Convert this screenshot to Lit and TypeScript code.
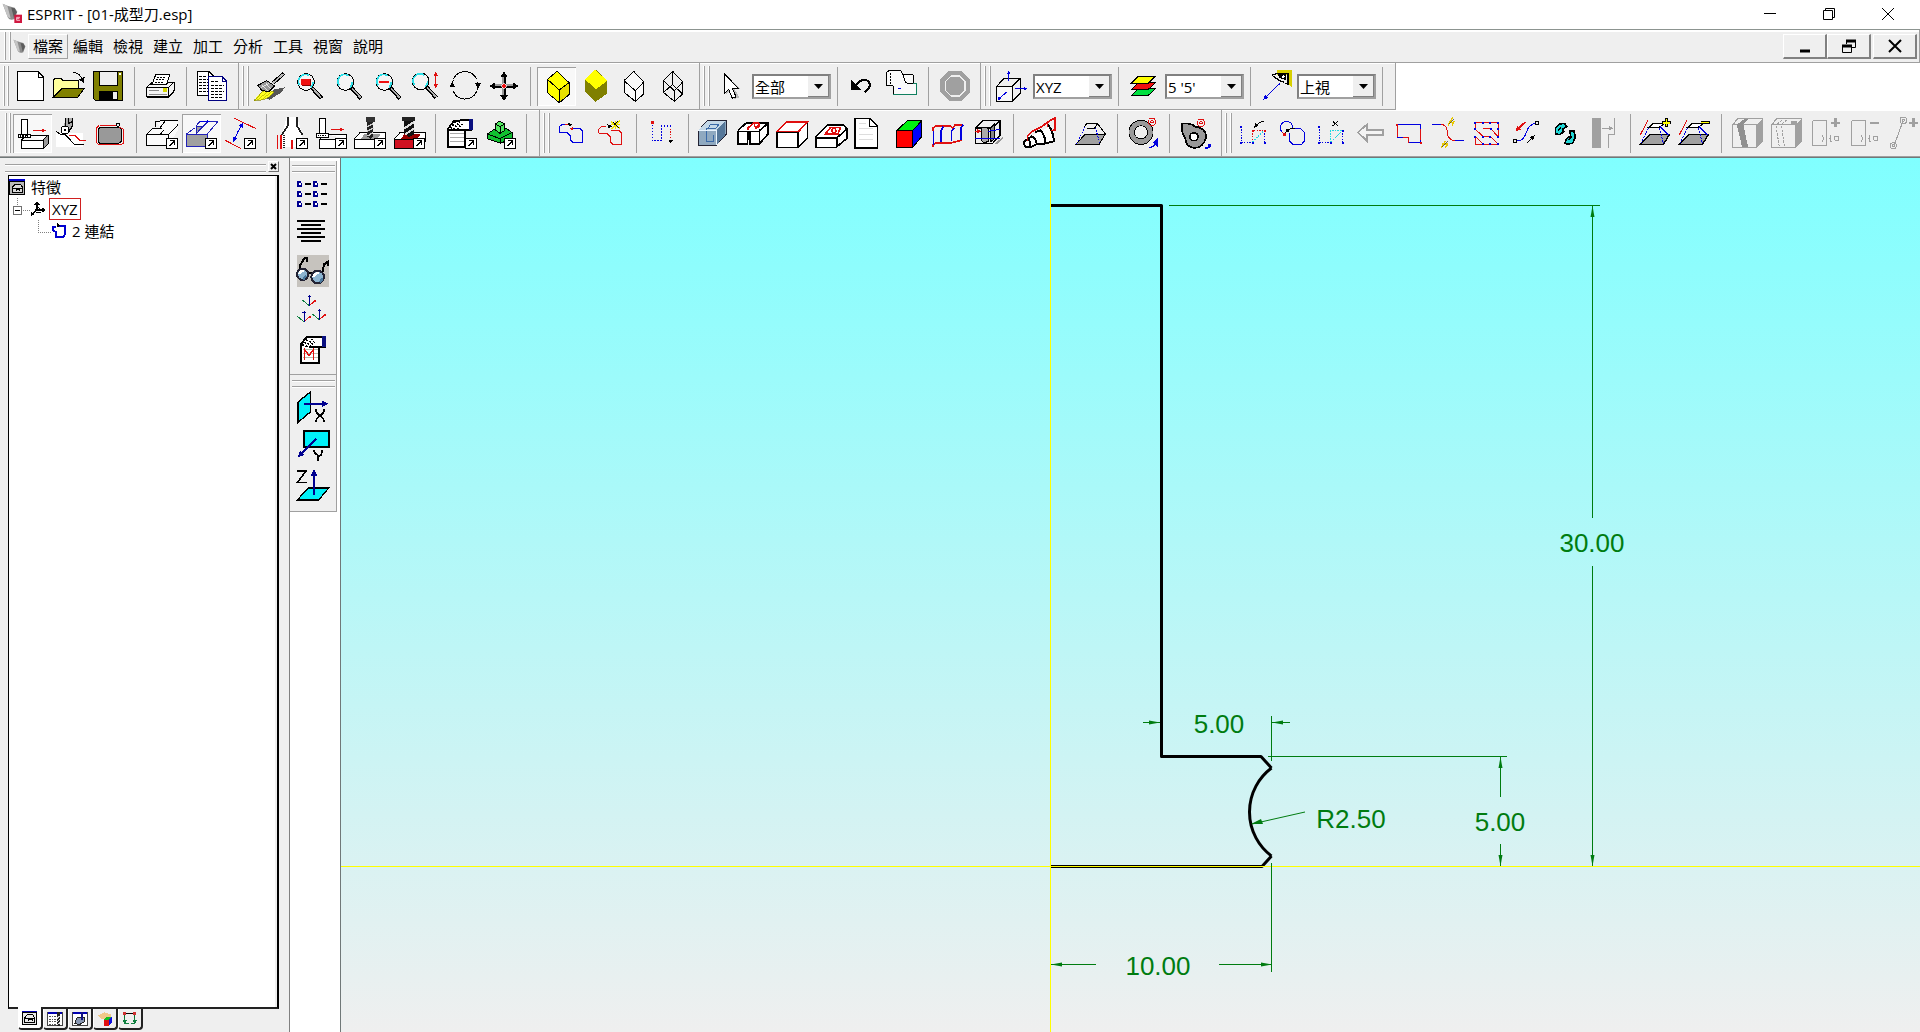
import { LitElement, html, css, svg, nothing, TemplateResult } from "lit";
import { customElement, state } from "lit/decorators.js";

type Art = unknown;
interface Tool { label: string; x: number; y: number; art: Art; on?: boolean; off?: boolean }
interface Combo { label: string; options: string[] }
type Item = Tool | Combo | "|";

/* Artwork uses three units per pixel; x and y name the corner of each icon's cell. */
const p = (d: string, stroke = "#000", w = 3, fill = "none", dash = ""): Art =>
  svg`<path d=${d} stroke=${stroke} stroke-width=${w} fill=${fill} stroke-dasharray=${dash || nothing}></path>`;
const f = (d: string, fill = "#000"): Art => p(d, "none", 0, fill);
const c = (x: number, y: number, r: number, stroke = "#000", w = 3, fill = "none"): Art =>
  svg`<circle cx=${x} cy=${y} r=${r} stroke=${stroke} stroke-width=${w} fill=${fill}></circle>`;
const arrow = (x1: number, y1: number, x2: number, y2: number, color = "#000", w = 3, h = 12): Art => {
  const a = Math.atan2(y2 - y1, x2 - x1);
  const bx = x2 - Math.cos(a) * h, by = y2 - Math.sin(a) * h;
  const nx = (-Math.sin(a) * h) / 2, ny = (Math.cos(a) * h) / 2;
  return [
    p(`M${x1},${y1}L${bx},${by}`, color, w),
    f(`M${x2},${y2}L${bx + nx},${by + ny}L${bx - nx},${by - ny}z`, color),
  ];
};
const more = (x: number, y: number): Art => [
  p(`M${x + 70},${y + 73}h33v30h-33z`, "#000", 3, "#fff"),
  p(`M${x + 79},${y + 96}l15,-15M${x + 82},${y + 80}h13v13`, "#000", 3),
];
const lens = (x: number, y: number, inner: Art = nothing): Art => [
  p(`M${x + 18},${y + 18}L${x + 47},${y + 49}`, "#000", 12),
  p(`M${x + 20},${y + 19}L${x + 46},${y + 47}`, "#b0b0b0", 5),
  c(x, y, 25, "#000", 3, "#f4f4f4"),
  p(`M${x - 19},${y + 10}A21,21 0 0 1 ${x + 10},${y - 19}M${x + 14},${y + 16}A21,21 0 0 0 ${x + 21},${y}`, "#2fe0e8", 5),
  inner,
];
const ctrl = "#a0a0a0";
const RED = "#e01010", BLUE = "#0000e0";

const icon = (x: number, y: number, art: Art, w = 39, h = w) =>
  html`<svg class="ico" width=${w} height=${h} viewBox="${x} ${y} ${w * 3} ${h * 3}" aria-hidden="true">${art}</svg>`;

const dots = (pts: number[][], color: string, r = 3): Art =>
  pts.map(([x, y]) => f(`M${x - r},${y - r}h${2 * r}v${2 * r}h${-2 * r}z`, color));

const cube = "M231,34L202,58V98L238,128L267,104V68z";
const cubeIn = "M202,58L238,90L267,68M238,90V128";

const fileBand: Item[] = [
  { label: "開新檔案", x: 33, y: 201, art: [p("M52,214H114L131,231V301H52z", "#000", 3, "#fff"), p("M114,214V231H131")] },
  { label: "開啟", x: 150, y: 201, art: [
    p("M160,291V241L166,235H183L189,241H236V264H187z", "#000", 3, "#ffff9c"),
    p("M160,291L187,264H254L234,291z", "#000", 3, "#808000"),
    p("M219,218Q238,216 247,240"), f("M236,238L252,250L254,230z")] },
  { label: "儲存", x: 267, y: 201, art: [
    p("M281,214H368V300H285L281,296z", "#000", 3, "#808000"), p("M297,214H352V256H297z", "#000", 3, "#efefef"),
    f("M297,272H354V300H297z"), f("M338,277H350V296H338z", "#efefef"), f("M358,219h6v6h-6z", "#fff")] },
  "|",
  { label: "列印", x: 423, y: 201, art: [
    p("M440,262L458,246H522V272L506,290H440z", "#000", 3, "#f4f4f4"), p("M440,262H506V290M506,262L522,246"),
    p("M468,222H510L500,254H456z", "#000", 3, "#fff"), p("M472,231h27M468,239h27M464,247h27", "#000", 3, "none", "6 3"),
    p("M446,270H478M446,283H500", "#888"), f("M488,264h14v11h-14z", "#d8d800"), p("M440,291H506L522,273", "#000", 4)] },
  "|",
  { label: "複製", x: 579, y: 201, art: [
    p("M592,214H626L640,228V286H592z", "#000", 3, "#fff"), p("M626,214V228H640"),
    p("M598,229h22M598,238h34M598,247h30M598,256h34M598,265h34M598,275h30", "#000", 3, "none", "9 3"),
    p("M626,230H666L680,244V301H626z", "#000080", 3, "#fff"), p("M666,230V244H680", "#000080"),
    p("M632,245h25M632,255h40M632,264h34M632,273h40M632,282h34M632,291h34", "#000", 3, "none", "9 3")] },
];

const viewBand: Item[] = [
  { label: "重繪", x: 753, y: 201, art: [
    f("M792,290L824,268L854,262L846,276L808,300z", "#555"),
    p("M762,302Q778,276 800,268L822,276Q806,302 762,302z", "#808000", 2, "#ffff20"), p("M772,300L802,276M784,300L812,278", "#b0b000", 2),
    p("M774,256L800,242L824,258L806,276L784,270z", "#000", 3, "#999"), p("M784,254L802,272M796,248L812,266M782,264L806,250", "#fff", 2),
    p("M818,250L852,220", "#000", 11), p("M818,250L850,222", "#bbb", 5)] },
  { label: "視窗縮放", x: 870, y: 201, art: lens(918, 246, [f("M903,236h28v20h-28z", "#f01010"), p("M905,256h26v-20", "#800", 3)]) },
  { label: "縮放", x: 987, y: 201, art: lens(1036, 246) },
  { label: "縮小", x: 1104, y: 201, art: lens(1153, 246, f("M1137,243h31v7h-31z", "#f01010")) },
  { label: "動態縮放", x: 1221, y: 201, art: [lens(1262, 244), arrow(1307, 240, 1307, 215, RED, 3, 14), arrow(1307, 240, 1307, 265, RED, 3, 14)] },
  { label: "旋轉", x: 1338, y: 201, art: [
    p("M1360,238A38,38 0 0 1 1430,238M1430,274A38,38 0 0 1 1360,274"), p("M1357,262Q1356,250 1360,240M1434,246Q1435,258 1431,270"),
    f("M1348,262L1357,246L1367,262z"), f("M1425,250L1434,267L1443,250z")] },
  { label: "平移", x: 15, y: 21, art: [
    p("M72,44V112M38,78H106", "#999", 10), p("M74,46V112M38,80H106", "#000", 5),
    f("M72,34L60,52H84z"), f("M72,122L60,106H84z"), f("M29,78L46,66V90z"), f("M115,78L98,66V90z"), c(72, 78, 7, "#fff", 2, "#f01010")] },
  "|",
  { label: "著色加邊", x: 171, y: 21, on: true, art: [p(cube, "#000", 3, "#ff0"), f("M238,90L267,68V104L238,128z", "#e8e000"), p(cube), p(cubeIn)] },
  { label: "著色", x: 288, y: 21, art: [f("M348,30L315,58V96L346,126L382,100V62z", "#808000"), f("M345,30L315,58L348,88L382,62z", "#ff0")] },
  { label: "隱藏線", x: 405, y: 21, art: [p("M461,34L432,62V97L466,124L491,102V66z", "#000", 3, "#fafafa"), p("M432,62L466,92L491,66M466,92V124")] },
  { label: "線架構", x: 522, y: 21, art: [p("M578,34L550,62V97L583,124L608,102V66z"), p("M550,62L583,92L608,66M583,92V124M578,34V74L550,97M578,74L608,102", "#000", 3)] },
];

const selectBand: Item[] = [
  { label: "選取", x: 696, y: 21, art: [f("M738,46V104L750,92L762,118L778,112L764,88H782z", "#bbb"), p("M733,41V100L746,88L757,115L768,111L757,84H774z", "#000", 3, "#fff")] },
  { label: "選取類型", options: ["全部"] },
  "|",
  { label: "復原", x: 1092, y: 21, art: [p("M1126,80C1136,56 1164,54 1169,72C1171,82 1164,90 1154,96", "#000", 6), f("M1113,60V91L1144,89z")] },
  { label: "群組", x: 1209, y: 21, art: [
    f("M1219,38L1227,32H1262L1268,42H1296L1301,48V70H1310V103H1240V77H1219z", "#fafafa"),
    p("M1219,74V38L1227,32H1262L1268,42H1296L1301,48V69M1219,75H1236L1240,80V103"), p("M1231,40V74", "#000", 3, "none", "4 5"),
    p("M1268,42L1276,66L1284,70H1300", "#000", 3), p("M1240,103H1310V70H1298", "#108060", 3), p("M1253,86h10", BLUE)] },
  "|",
  { label: "停止", x: -18, y: 21, off: true, art: [
    f("M24,33H62L88,59V97L62,123H24L-2,97V59z", "#a0a0a0"), p("M30,48H56L72,64V92L56,108H30L14,92V64z", "#efefef", 4)] },
];

const planeBand: Item[] = [
  { label: "工作平面", x: 159, y: 21, art: [
    p("M170,79H216V124H170z", "#000", 3, "#f8f8f8"), p("M170,79L192,55H240V100L216,124M216,79L240,55"),
    arrow(206, 64, 206, 31, BLUE), arrow(226, 86, 263, 86, BLUE), arrow(200, 96, 172, 121, BLUE)] },
  { label: "座標系", options: ["XYZ"] },
  "|",
  { label: "圖層", x: 555, y: 21, art: [
    p("M594,86H646L624,107H574z", "#000", 3, "#00e040"), p("M594,68H646L624,89H574z", "#000", 3, "#f01010"), p("M594,49H646L624,70H574z", "#000", 3, "#ff0")] },
  { label: "目前圖層", options: ["5 '5'"] },
  "|",
  { label: "視圖", x: 951, y: 21, art: [
    f("M1012,30H1056V84L1044,72V44H1012z", "#d8d000"), p("M996,46L1012,40H1044V72L1034,70M1000,48Q1014,62 1032,66M1014,42Q1020,52 1034,54", "#000", 4),
    f("M1012,42H1038V60L1018,54z"), c(1030, 50, 4, "none", 0, "#fff"), arrow(1020, 70, 970, 119, BLUE, 3, 15)] },
  { label: "視角", options: ["上視"] },
  "|",
];

const cutBlock = (x: number, color: string): Art => [
  p(`M${x},418L${x + 18},398H${x + 94}V424L${x + 72},444H${x}z`, "#000", 3, "#fff"),
  f(`M${x},418H${x + 74}V444H${x}z`, color), p(`M${x},418H${x + 74}V444H${x}z`),
  f(`M${x + 22},416L${x + 30},402H${x + 80}L${x + 70},416z`, color === "#fff" ? "#999" : "#900"),
];

const millBand: Item[] = [
  { label: "加工", x: 39, y: 342, on: true, art: [
    p("M64,358H81V402H64z", "#000", 3, "#fff"), p("M56,403H90V413H56z", "#000", 3, "#fff"), p("M60,408h28", "#000", 4, "none", "4 3"),
    p("M64,420H130V446H64zM64,420L80,406M92,406H144L130,420M144,406V432L130,446", "#000", 3, "#fff"), f("M131,420L143,408V431L131,444z", "#999"), arrow(99, 391, 138, 391, RED)] },
  { label: "模擬", x: 156, y: 342, art: [
    f("M168,398H250V442H168z", "#fff"), f("M196,354H218V378L206,392L192,376z", "#aaa"), p("M196,354V378M206,354V370L218,364M217,354V378L206,396", "#000", 4),
    c(195, 390, 12, "#000", 3, "#fff"), c(195, 390, 3, "#000", 3),
    p("M168,393L182,404H196L224,434H252"), p("M206,406H224L238,420H258", RED)] },
  { label: "加工範圍", x: 273, y: 342, art: [
    p("M300,383H360L364,389V424L356,430H300L294,424V389z", "#000", 3, "#999"), p("M300,376H348M358,382L370,388V430L362,434H298L289,428V384L298,376", RED), c(354, 374, 5)] },
  "|",
  { label: "特徵工具", x: 429, y: 342, art: [
    f("M439,404L462,384H480L468,362H534V390L506,436H439z", "#fafafa"),
    p("M439,404H506V436H439zM439,404L460,384H480L496,362H534M466,364L494,362M466,364V382M466,384L486,384M506,404L534,374M480,404L492,390"), more(429, 342)] },
  { label: "特徵辨識", x: 546, y: 342, on: true, art: [
    f("M560,404H622V440H560z", "#a0a0a0"), f("M588,380H606L588,402V380z", "#a0a0a0"),
    p("M560,402H622V440H560zM560,402L584,384M588,402V378L600,364M588,380H608L588,402M608,380L624,364M622,402L654,364M630,364H654", "#2222b8", 3), arrow(600, 364, 630, 364, BLUE, 3, 10), more(546, 342)] },
  { label: "量測", x: 663, y: 342, art: [
    p("M702,354L768,386M674,420L724,446", RED), arrow(714, 396, 728, 368, BLUE, 3, 14), arrow(716, 390, 700, 426, BLUE, 3, 14), more(663, 342)] },
  "|",
  { label: "車削", x: 819, y: 342, art: [
    f("M860,352H892L906,402V440H846V402z", "#fff"), p("M864,352V376L844,406M890,352V376L908,406", "#222", 5),
    p("M832,404V446M842,404V446", RED, 5), p("M852,404V446", "#222", 8, "none", "3 3"), p("M876,420V446", RED, 5), more(819, 342)] },
  { label: "銑削", x: 936, y: 342, art: [
    p("M958,356H975V400H958z", "#000", 3, "#fff"), p("M950,401H984V411H950z", "#000", 3, "#fff"), p("M953,406h28", "#000", 4, "none", "4 3"),
    p("M958,418H1006V444H958zM958,418L968,411M984,403H1040V418", "#000", 3, "#fff"), arrow(992, 388, 1032, 388, RED), more(936, 342)] },
  { label: "鑽孔", x: 1053, y: 342, art: [
    cutBlock(1062, "#fff"), f("M1098,352H1124V366H1098z", "#333"), f("M1102,366H1120V410L1111,416L1102,410z", "#222"), p("M1102,380L1120,370M1102,394L1120,384M1102,408L1120,398", "#ccc", 4), more(1053, 342)] },
  { label: "模具加工", x: 1170, y: 342, art: [
    cutBlock(1182, "#d01020"), f("M1206,352H1246V364H1206z", "#222"), f("M1212,364H1242V404L1226,412L1212,400z", "#111"), p("M1212,386L1242,366M1214,404L1242,386", "#ddd", 6), more(1170, 342)] },
  "|",
  { label: "報表", x: 1326, y: 342, art: [
    p("M1344,440V386L1362,362H1394V440z", "#000", 5, "#fff"), p("M1350,400H1392M1350,412H1392M1350,424H1392", "#aaa", 4),
    p("M1380,360H1414V390H1380", "#000", 4, "#fff"), f("M1406,358H1418V391H1406z", "#0a1080"),
    p("M1352,384L1366,366M1360,388L1380,364M1372,388L1386,372", "#000", 6, "none", "5 4"), p("M1346,390H1400", "#000", 4), more(1326, 342)] },
  { label: "實體", x: 3, y: 162, art: [
    p("M22,222L46,206H80L96,218V234L62,250L22,236z", "#000", 3, "#10c030"), p("M22,222L60,236L96,218M60,236V250", "#000", 3),
    p("M46,192L58,184L74,192V212L60,220L46,210z", "#000", 3, "#50e860"), p("M46,192L60,200L74,192M60,200V218", "#000", 3), more(3, 162)] },
  "|",
];

const ring = (x: number, y: number): Art => [c(x, y, 11, RED, 3), c(x, y, 4, RED, 3)];

const featureBand: Item[] = [
  { label: "鏈結", x: 216, y: 162, art: [
    p("M238,218V200L246,194H258M238,218H262L272,228V240L280,248H308V214L300,206H278", BLUE), p("M256,193H270", RED), f("M264,187L278,194L266,199z"), f("M268,206l12,-5v10z", RED)] },
  { label: "自動鏈結", x: 333, y: 162, art: [
    p("M356,220V208L364,200H378M356,220H380L390,230V246L398,252H424V218L416,210H392", RED), f("M382,192L398,199L384,205z"),
    p("M392,184L420,206M406,182V208M420,182L392,208M392,194H420", "#f0e800", 4), p("M400,186L416,204M412,184L404,194")] },
  "|",
  { label: "點群", x: 489, y: 162, art: [
    p("M517,194V242H544V198H572", BLUE, 4, "none", "4 5"), f("M513,183h9v9h-9z", RED), p("M572,206V236", RED, 4, "none", "4 4"), f("M565,240H579L572,250z")] },
  "|",
  { label: "實體模型", x: 645, y: 162, art: [
    p("M655,212L684,180H738V224L708,256H655z", "#223", 3, "#8fa9c0"), f("M656,211L684,182H736L708,211z", "#c4d8e8"), f("M710,211L736,184V224L710,254z", "#56789a"),
    p("M684,206L690,194H716L708,204H680V244H700V224", "#3a6aa8"), p("M655,212H708V256", "#e8f4ff", 3)] },
  { label: "口袋", x: 762, y: 162, art: [
    f("M773,212L800,188H864V220L838,250H773z", "#fff"),
    p("M773,214H802V252H773zM810,214H838V252H810zM773,212L800,188H864V222L840,250M838,212L864,190M806,214V240", "#000", 5),
    p("M802,206L822,188M826,206L834,196M800,208h8", RED, 5), c(830, 195, 7, RED, 5)] },
  { label: "面", x: 879, y: 162, art: [
    p("M891,216H954V262H891zM954,216L982,186V234L954,262", "#000", 5, "#fff"), p("M891,214L920,186H982L956,214z", RED, 5, "#fff")] },
  { label: "孔", x: 996, y: 162, art: [
    p("M1008,234V262H1068L1100,236V206L1090,194H1044L1008,230z", "#000", 5, "#fff"), p("M1008,234H1070V262M1070,234L1100,208", "#000", 5),
    p("M1036,222L1052,202H1082L1074,222z", RED, 5), c(1062, 212, 6, RED, 4)] },
  { label: "文件", x: 1113, y: 162, art: [
    p("M1124,175H1170L1192,198V264H1124z", "#000", 5, "#fff"), p("M1168,175V199H1192", "#000", 5), p("M1136,190h22M1136,206h44M1136,222h44M1136,238h44", "#ddd", 3)] },
  { label: "彩色方塊", x: 1230, y: 162, art: [
    p("M1250,212L1282,182H1325L1298,212z", "#000", 3, "#00f010"), p("M1250,212H1298V262H1250z", "#000", 3, "#f00"), p("M1298,212L1325,182V230L1298,262z", "#000", 3, "#00f")] },
  { label: "直紋面", x: -33, y: 162, art: [
    p("M-22,214V204L-12,198H30M-22,260V254L-12,248H36L66,240", RED, 5), p("M30,198L38,204L46,194H70", RED, 5), p("M-20,214V254M10,200L2,216V246M42,204L34,214V244M70,194L62,204V240", BLUE, 5)] },
  { label: "剖面", x: 84, y: 162, art: [
    f("M164,250L190,230V236L172,254z", "#999"), p("M106,204L128,182H180V226L158,250H106z", "#000", 4, "#efefef"), p("M106,204H158L180,182", "#000", 4),
    p("M124,206Q132,198 144,206V244Q130,252 124,240z", "#000", 3, "#aaa"), p("M150,206L164,192V236L150,246z", "#000", 3, "#888"), p("M106,236H180M144,214L180,208", BLUE), arrow(106, 214, 124, 214, RED, 3, 12)] },
  "|",
  { label: "輪廓", x: 240, y: 162, art: [
    f("M254,236L276,226L330,200L342,214V246L270,262L252,260z", "#fff"),
    p("M264,236Q276,250 268,262Q252,264 252,248Q256,238 264,240M270,262L296,250M274,228Q288,236 290,250M302,212Q318,228 314,250Q306,256 296,250M324,194Q340,214 342,244L318,250M286,216L304,210M262,238L276,228", "#000", 6),
    p("M262,242V228L280,212L306,200L320,188L344,174V210L332,212M322,188V200", RED, 5)] },
  "|",
  { label: "斜面", x: 396, y: 162, art: [
    p("M409,252L436,222H496L478,252z", "#000", 3, "#a0a0a0"), p("M440,190H472L496,222M478,252L496,222"), p("M434,200L440,190M440,204H464L472,192"), p("M409,252L436,200M480,250L466,204", BLUE, 3, "none", "5 4")] },
  "|",
  { label: "圓環", x: 552, y: 162, art: [c(603, 217, 28, "#000", 19), c(603, 217, 28, "#999", 14), ring(636, 185), p("M626,264Q640,262 646,250", BLUE, 4), f("M654,234V262L640,248z", BLUE)] },
  "|",
  { label: "凸輪", x: 708, y: 162, art: [
    p("M725,192Q748,186 766,200Q800,204 798,234Q790,262 764,264Q738,262 736,236Q724,218 725,192z", "#000", 5, "#999"), c(762, 230, 12, "#000", 5, "#fff"), ring(783, 188), f("M796,260h8v-8h8v10l-8,4h-8z", BLUE)] },
];

const taper = (dx: number): Art => [
  p(`M${660 + dx},434L${690 + dx},404H${748 + dx}L${730 + dx},434z`, "#000", 4, "#a0a0a0"), p(`M${686 + dx},382L${698 + dx},371H${732 + dx}L${718 + dx},382z`, "#000", 4, "#fff"),
  p(`M${662 + dx},430L${686 + dx},384M${718 + dx},384L${730 + dx},430`, BLUE, 3, "none", "6 3"), p(`M${720 + dx},380L${746 + dx},406`, BLUE), p(`M${660 + dx},406L${684 + dx},361`, RED),
];

const editBand: Item[] = [
  { label: "編輯點", x: 882, y: 162, art: [
    p("M904,200V248H938M974,212V248", BLUE, 3, "none", "4 4"), p("M938,248V212H974", RED, 3, "none", "4 4"), p("M938,246L970,214", "#20d8e0", 3, "none", "4 4"),
    dots([[904, 200], [904, 248], [938, 248], [974, 248]], BLUE), dots([[938, 212], [974, 212]], RED), p("M972,184Q958,184 950,196"), f("M942,204l4,-14l10,8z")] },
  { label: "相切", x: 999, y: 162, art: [
    p("M1026,216Q1014,204 1026,190Q1040,178 1054,190Q1060,200 1056,206H1082L1094,218V242L1084,254H1060L1048,242V220", BLUE), p("M1026,216L1034,226", RED), c(1034, 224, 4, RED, 3), p("M1064,206Q1052,204 1042,212"), f("M1036,218l4,-12l8,8z")] },
  { label: "刪除點", x: 1116, y: 162, art: [
    p("M1138,200V248H1172M1208,212V248", BLUE, 3, "none", "4 4"), p("M1172,248V212H1208M1172,246L1206,214", "#20d8e0", 3, "none", "5 3"),
    dots([[1138, 200], [1138, 248], [1172, 248], [1208, 248], [1208, 212]], BLUE), p("M1178,184L1194,198M1194,184L1178,198")] },
  { label: "返回", x: 1233, y: 162, off: true, art: p("M1254,217L1280,194V209H1328V225H1280V242z", ctrl, 5, "#f4f4f4") },
  { label: "封閉外形", x: 1350, y: 162, art: [p("M1372,194H1442V248H1406V232H1372z", BLUE), p("M1372,232V194M1406,248V232H1390M1442,240V206", RED, 3), dots([[1372, 194], [1442, 248]], RED)] },
  { label: "修剪", x: 27, y: 342, art: [
    p("M36,373H62M104,422H132", BLUE), p("M62,373Q82,374 82,398Q84,420 104,422", RED), p("M84,376L98,352M96,376L104,362M64,444L76,422M76,444L84,430M88,368h14M66,432h14", "#e8c800", 4), p("M86,372L102,356M66,440L82,424", "#222", 2)] },
  { label: "路徑", x: 144, y: 342, art: [
    p("M166,368H234V410L212,386H188M166,368V388L190,410H212L234,432H166L166,410L190,432", RED),
    dots([[166, 368], [188, 368], [210, 368], [234, 368], [166, 388], [212, 388], [234, 388], [188, 410], [166, 410], [210, 410], [234, 410], [188, 432], [210, 432], [234, 432]], BLUE)] },
  { label: "反向", x: 261, y: 342, art: [
    p("M288,423Q310,424 318,400Q326,372 348,370", BLUE), c(285, 423, 5), c(351, 369, 5), arrow(316, 366, 286, 394, RED, 5, 16), arrow(322, 428, 344, 406, "#000", 4, 14)] },
  { label: "循環", x: 378, y: 342, art: [
    p("M406,402V384L418,372L434,370L440,380L428,388L432,394L420,404z", "#000", 5, "#20d8d8"), p("M434,430L440,416L452,408L450,392H462L466,412L458,430L444,432z", "#000", 5, "#20d8d8"), p("M414,392l10,-12M446,420l10,-12", "#000", 4)] },
  { label: "對齊", x: 495, y: 342, off: true, art: [f("M515,353H543V444H515z", "#a0a0a0"), p("M584,353V402H566V444", ctrl), arrow(545, 385, 580, 385, ctrl)] },
  "|",
  { label: "新增斜度", x: 651, y: 342, art: [taper(0), p("M739,355V381M726,368H752", "#000", 10), p("M739,357V379M728,368H750", "#ff0", 5)] },
  { label: "移除斜度", x: 768, y: 342, art: [taper(117), p("M842,368H870", "#000", 9), p("M844,368H868", "#ff0", 4)] },
  "|",
  { label: "曲面一", x: 924, y: 342, off: true, art: [
    p("M938,374L954,356H1028V424L1010,442H938z", ctrl, 4), p("M938,374H1010V442", ctrl, 4), f("M1010,374L1028,358V424L1010,442z", "#a0a0a0"), f("M950,374L972,358H986L970,374L984,440H966z", "#909090")] },
  { label: "曲面二", x: 1041, y: 342, off: true, art: [
    p("M1055,374L1071,356H1145V424L1127,442H1055z", ctrl, 4), p("M1055,374H1127V442", ctrl, 4), f("M1127,374L1145,358V424L1127,442z", "#a0a0a0"), p("M1072,372L1088,358M1086,372L1102,358M1068,378L1078,440M1084,378L1094,440", ctrl, 3, "none", "7 4"), f("M1112,362h18v10h-18z", "#a0a0a0")] },
  { label: "加入段", x: 1158, y: 342, off: true, art: [p("M1176,366L1180,361H1220V436H1176z", ctrl), p("M1206,404Q1214,416 1206,426M1234,404Q1226,416 1234,426", ctrl), c(1250, 415, 7, ctrl), p("M1246,355V381M1233,368H1259", ctrl, 7)] },
  { label: "移除段", x: 1275, y: 342, off: true, art: [p("M1293,366L1297,361H1337V436H1293z", ctrl), p("M1323,404Q1331,416 1323,426M1351,404Q1343,416 1351,426", ctrl), c(1367, 415, 7, ctrl), p("M1350,368H1378", ctrl, 7)] },
  { label: "連接點", x: 1392, y: 342, off: true, art: [p("M1448,366L1424,432M1424,432V442", ctrl), c(1450, 361, 10, ctrl), c(1450, 361, 3, ctrl), c(1420, 437, 9, ctrl), c(1420, 437, 3, ctrl), p("M1480,355V381M1467,368H1493", ctrl, 7)] },
];

const triad = (x: number, y: number): Art => [
  p(`M${x},${y}L${x - 20},${y - 16}`, "#108040"), p(`M${x},${y}L${x + 16},${y - 14}`, RED), p(`M${x},${y}V${y - 32}M${x - 5},${y - 27}h10`, "#000090"),
  dots([[x - 20, y - 16]], "#108040", 2), dots([[x + 17, y - 15]], RED, 3),
];

const sideTools: Tool[] = [
  { label: "特徵清單", x: 882, y: 60, art: [87, 117, 147].map((y) => [890, 938].map((x) => [p(`M${x + 3},${y - 6}h11v12h-11z`, "#000090", 5, "#fff"), f(`M${x + 12},${y - 8}h5v5h-5z`, "#efefef"), p(`M${x + 26},${y}h16`, "#000", 4)])) },
  { label: "屬性", x: 882, y: 177, art: p("M891,198H975M903,210H963M891,222H975M903,234H963M891,246H975M903,258H963", "#000", 6) },
  { label: "遮罩", x: 882, y: 294, art: [
    f("M890,300H987V395H890z", "#c6c3be"), p("M899,346V332L914,309H922V320M968,350L972,328L984,320V332", "#000", 6), p("M920,354H940", "#000", 8),
    c(908, 358, 17, "#223", 6, "#8cb4d0"), c(953, 366, 19, "#223", 6, "#8cb4d0"), p("M898,358Q900,346 912,348M940,366Q944,354 956,354", "#fff", 7), p("M910,374L918,362M960,382L968,370", "#4a789c", 7)] },
  { label: "座標軸", x: 882, y: 411, art: [triad(928, 452), triad(912, 500), triad(958, 494)] },
  { label: "巨集", x: 882, y: 528, art: [
    p("M903,624V568L920,546H958V624z", "#000", 6, "#fff"), p("M908,584H954M908,596H954M908,608H954", "#bba", 4),
    p("M926,546H974V575H926", "#000", 5, "#fff"), f("M966,544H978V577H966z", "#0a1080"), p("M908,572L924,552M918,576L936,552M930,576L942,560", "#000", 6, "none", "5 4"),
    p("M914,614V584L927,602L940,584V614", RED, 4)] },
];
const axisTools: Tool[] = [
  { label: "X 平面", x: 42, y: 60, art: [p("M54,96L91,66V126L54,157z", "#000", 4, "#00f0f8"), arrow(72, 101, 146, 101, "#000090", 5, 20), p("M108,118Q108,130 120,137T132,156M132,118Q132,130 120,137T108,156", "#000", 5)] },
  { label: "Y 平面", x: 42, y: 177, art: [p("M72,183H146V231H72z", "#000", 5, "#00f0f8"), arrow(109, 206, 53, 262, "#000090", 5, 20), p("M102,240Q102,250 114,256T126,240M114,256V274", "#000", 5)] },
  { label: "Z 平面", x: 42, y: 294, art: [p("M52,390L84,354H146L116,390z", "#000", 4, "#00f0f8"), arrow(102, 374, 102, 298, "#000090", 5, 20), p("M52,303H78L53,337H80", "#000", 5)] },
];

const tabs: Tool[] = [
  { label: "特徵", x: 66, y: 90, art: [f("M66,92H112V136H66z", "#000"), f("M69,98H109V133H69z", "#e8e8e8"), f("M66,92H112V97H66z", "#0000b0"), p("M74,128V114L82,104H98L104,114V128zM74,116H104M84,124V118H96V124", "#000", 3)] },
  { label: "刀具", x: 141, y: 90, art: [p("M143,94H186V134H143z", "#444", 3, "#fff"), f("M143,92H186V98H143z", "#0000b0"), p("M147,106H172M147,114H172M147,122H172M147,129H172", "#555", 3, "none", "5 3"), p("M176,92V136", "#222", 10), p("M171,112L181,104M171,122L181,114M171,132L181,124", "#ddd", 3)] },
  { label: "加工", x: 216, y: 90, art: [p("M218,94H262V134H218z", "#444", 3, "#fff"), f("M218,92H262V98H218z", "#0000b0"), p("M224,128L232,108H254V122L240,130z", "#222", 3, "#8896b0"), p("M246,92V118", "#101080", 7)] },
  { label: "實體", x: 291, y: 90, art: [f("M294,104L312,94L334,100V112L304,114z", "#f0c888"), f("M312,116L320,108H336L330,116z", "#10c020"), f("M312,116H328V134H312z", "#e01010"), f("M328,116L337,106V124L328,134z", "#1010e0")] },
  { label: "路徑", x: 366, y: 90, art: [p("M374,98V122M404,98V122", "#107030", 4), p("M374,98H404", "#000", 4), dots([[374, 98], [404, 98]], "#d03030", 5), arrow(374, 112, 374, 130, "#108040", 4, 12), arrow(404, 112, 404, 130, "#108040", 4, 12), p("M376,128h10M402,128h-10", "#108040", 4)] },
];

const cone = svg`
  <path d="M8,14L22,20L44,26L52,38L44,60Q30,66 24,56z" fill="#8c8c8c"></path>
  <path d="M8,14L22,20L32,58Q26,58 22,52z" fill="#c4c4c4"></path>
  <path d="M34,26L44,28L50,40L42,58z" fill="#5c5c5c"></path>`;

@customElement("app-root")
export class AppRoot extends LitElement {
  @state() private activeTab = 0;

  static styles = css`
    :host { display: flex; flex-direction: column; height: 100vh; overflow: hidden; background: #fff; color: #000;
      font: 15px/20px "Open Sans", "Noto Sans CJK TC", sans-serif; }
    *, *::before, *::after { box-sizing: border-box; }
    button { font: inherit; color: inherit; background: none; border: 0; padding: 0; margin: 0; display: flex; align-items: center; justify-content: center; flex: none; }
    svg { display: block; flex: none; }
    .ico { shape-rendering: crispEdges; }
    h1 { font: inherit; margin: 0; flex: 1; padding-left: 4px; }
    .title { display: flex; align-items: center; height: 30px; padding: 0 3px 2px 2px; border-bottom: 1px solid #8c9490; flex: none; }
    .title button { width: 59px; height: 26px; }
    .menubar { display: flex; align-items: center; height: 33px; background: #efefef; border-bottom: 1px solid #a0a0a0; border-right: 1px solid #a0a0a0; box-shadow: inset 0 2px #fff; padding-right: 2px; flex: none; }
    .menus { display: flex; flex: 1; padding-left: 2px; }
    .menus button { width: 40px; height: 25px; padding-bottom: 1px; }
    .menus button:first-child { border: 1px solid #fff; border-right-color: #a0a0a0; border-bottom-color: #a0a0a0; padding: 0; }
    .mdi { display: flex; }
    .mdi button { width: 44px; height: 25px; border: 1px solid #fff; border-right: 2px solid #808080; border-bottom: 2px solid #808080; }
    .mdi button:last-child { margin-left: 2px; }
    .row { display: flex; height: 47px; flex: none; overflow: hidden; border-bottom: 1px solid #a0a0a0; background: #efefef; }
    .row.fit { align-self: flex-start; border-right: 1px solid #a0a0a0; }
    .band { display: flex; flex: none; padding: 4px 6px 0 0; border-right: 1px solid #a0a0a0; box-shadow: inset 0 1px #fff; }
    .band:last-child { border-right: 0; }
    .grip { width: 12px; height: 40px; margin-top: -1px; flex: none; padding: 0 2px 0 3px; display: flex; justify-content: space-between; }
    .grip::before, .grip::after { content: ""; width: 2px; height: 100%; border-left: 1px solid #fff; border-right: 1px solid #a0a0a0; }
    .wide .band:first-child .grip { width: 13px; padding-left: 5px; }
    .band.lead .grip { width: 11px; }
    .menubar .grip { width: 13px; height: 28px; margin-top: 0; padding: 0 2px 0 4px; }
    .tool { width: 39px; height: 39px; overflow: hidden; }
    .tool.on { background: #f8f8f8; box-shadow: inset 1px 1px #a0a0a0, inset -1px -1px #fff; }
    .sep { width: 13px; height: 39px; flex: none; display: flex; justify-content: center; }
    .sep::before { content: ""; width: 1px; background: #a0a0a0; }
    .combo { position: relative; width: 79px; height: 25px; margin: 7px 0 0 1px; flex: none; border: 2px solid; border-color: #808080 #a0a0a0 #a0a0a0 #808080; background: #fff; display: flex; }
    .combo select { appearance: none; border: 0; margin: 0; padding: 0 22px 0 1px; width: 100%; font: inherit; color: inherit; background: none; outline: 0; }
    .combo span { position: absolute; right: 0; top: 0; bottom: 0; width: 21px; background: #efefef; border-right: 1px solid #808080; border-bottom: 1px solid #808080; display: grid; place-items: center; pointer-events: none; }
    .work { flex: 1; min-height: 0; display: flex; border-top: 1px solid #707878; }
    .panel { width: 290px; flex: none; background: #efefef; border-right: 1px solid #808080; padding: 0 10px 0 5px; display: flex; flex-direction: column; }
    .caption { display: flex; align-items: center; gap: 2px; height: 17px; flex: none; }
    .caption i { flex: 1; height: 8px; border: 1px solid #a0a0a0; border-width: 1px 0; margin-top: 2px; box-shadow: inset 0 1px #fff, 0 1px #fff; }
    .caption button { width: 11px; height: 11px; border: 1px solid #fff; border-right-color: #707070; border-bottom-color: #707070; }
    .tree { flex: 1; margin: 0 0 0 3px; padding: 0; list-style: none; background: #fff; border: 1px solid #000; border-right-width: 2px; border-bottom: 2px solid #222; box-shadow: inset -2px 0 #efefef; }
    .tree li { display: flex; align-items: center; height: 22px; }
    .tree .root .name { padding-left: 6px; }
    .tree .link .name { padding-left: 5px; }
    .tree .picked { border: 1px solid #d02020; height: 22px; margin-left: 2px; padding: 0 2px; }
    .tabs { display: flex; flex: none; height: 23px; padding: 0 0 1px 13px; }
    .tabs button { width: 25px; height: 21px; border: solid #222; border-width: 0 2px 2px 0; border-left: 1px solid #fff; border-radius: 0 0 4px 4px; }
    .tabs button.active { background: #fff; margin-top: -2px; height: 23px; }
    .side { width: 51px; flex: none; border-right: 1px solid #707878; padding-top: 3px; }
    .dock { width: 47px; background: #efefef; border: solid #a0a0a0; border-width: 0 1px 1px 0; padding: 0 3px 4px 4px; display: flex; flex-direction: column; }
    .dock i { height: 7px; margin: 4px -2px 3px; border: solid #a0a0a0; border-width: 1px 0; box-shadow: inset 0 1px #fff, 0 1px #fff; }
    .dock + .dock { padding-top: 1px; }
    .view { flex: 1; min-width: 0; background: linear-gradient(#80ffff, #efefef); }
    .view svg { width: 100%; height: 100%; overflow: hidden; }
    .axes { stroke: #ff0; stroke-width: 1px; shape-rendering: crispEdges; }
    .dim text { font: 26px "Liberation Sans", Arial, sans-serif; fill: #007c10; text-anchor: middle; }
  `;

  private tool(t: Tool): TemplateResult {
    return html`<button class="tool ${t.on ? "on" : ""}" aria-label=${t.label} ?disabled=${t.off ?? false}>${icon(t.x, t.y, t.art)}</button>`;
  }

  private band(items: Item[], lead = false): TemplateResult {
    return html`<div class="band ${lead ? "lead" : ""}" role="toolbar"><span class="grip"></span>${items.map((it) =>
      it === "|" ? html`<span class="sep"></span>`
      : "options" in it ? html`<label class="combo"><select aria-label=${it.label}>${it.options.map((o) => html`<option>${o}</option>`)}</select>
          <span><svg width="9" height="5" viewBox="0 0 9 5"><path d="M0,0H9L4.500,5z"></path></svg></span></label>`
      : this.tool(it))}</div>`;
  }

  private drawing(): TemplateResult {
    const head = (x: number, y: number, dx: number, dy: number) =>
      svg`<path fill="#007c10" d="M${x},${y}l${dx * 11 - dy * 2},${dy * 11 - dx * 2}l${dy * 4},${dx * 4}z"></path>`;
    return html`<svg viewBox="341 158 1579 874" preserveAspectRatio="xMidYMid slice" role="img" aria-label="成型刀">
      <g fill="none" stroke="#000" stroke-width="3" stroke-linejoin="round">
        <path d="M1051,205.500H1161.500V756.500H1261L1271.500,768"></path>
        <path d="M1271.500,768A55,55 0 0 0 1271.500,856"></path>
        <path d="M1271.500,856L1262,866.500H1051"></path>
      </g>
      <g class="axes"><path d="M1050.500,158V1032"></path><path d="M341,866.500H1920"></path></g>
      <g class="dim" stroke="none">
        <g stroke="#007c10" stroke-width="1" fill="none">
          <path d="M1169,205.500H1600M1592.500,206V518M1592.500,566V866"></path>
          <path d="M1143,722.500H1160M1272,722.500H1290M1271.500,716V761"></path>
          <path d="M1268,756.500H1507M1500.500,757V797M1500.500,844V866"></path>
          <path d="M1305,812L1252,824"></path>
          <path d="M1051,964.500H1096M1219,964.500H1272M1271.500,863V972"></path>
        </g>
        ${head(1592.5, 206, 0, 1)}${head(1592.5, 866, 0, -1)}
        ${head(1500.5, 757, 0, 1)}${head(1500.5, 866, 0, -1)}
        ${head(1160, 722.5, -1, 0)}${head(1272, 722.5, 1, 0)}
        ${head(1051, 964.5, 1, 0)}${head(1272, 964.5, -1, 0)}
        <path fill="#007c10" d="M1251,824L1261,819L1263,824z"></path>
        <text x="1592" y="552">30.00</text>
        <text x="1219" y="733">5.00</text>
        <text x="1500" y="831">5.00</text>
        <text x="1351" y="828">R2.50</text>
        <text x="1158" y="975">10.00</text>
      </g>
    </svg>`;
  }

  render() {
    return html`
      <header class="title">
        <svg width="21" height="21" viewBox="6 12 63 63" aria-hidden="true">${cone}<path d="M43,47H66V72H43z" fill="#d01840"></path><path d="M60,55H50V64H60M50,59H58" stroke="#f8b8c8" stroke-width="3" fill="none"></path></svg>
        <h1>ESPRIT - [01-成型刀.esp]</h1>
        <button aria-label="最小化"><svg width="12" height="12"><path d="M0,5.500H12" stroke="#000"></path></svg></button>
        <button aria-label="還原"><svg width="12" height="12" fill="none" stroke="#000"><path d="M0.500,2.500H9.500V11.500H0.500zM2.500,2.500V0.500H11.500V9.500H9.500"></path></svg></button>
        <button aria-label="關閉"><svg width="12" height="12" stroke="#000"><path d="M0,0L12,12M12,0L0,12"></path></svg></button>
      </header>
      <nav class="menubar">
        <span class="grip"></span>
        <svg width="13" height="15" viewBox="6 12 48 54" aria-hidden="true">${cone}</svg>
        <div class="menus">${["檔案", "編輯", "檢視", "建立", "加工", "分析", "工具", "視窗", "說明"].map((m) => html`<button>${m}</button>`)}</div>
        <div class="mdi">
          <button aria-label="最小化視窗"><svg width="16" height="14"><path d="M3,12H13" stroke="#000" stroke-width="3"></path></svg></button>
          <button aria-label="還原視窗"><svg width="16" height="14" fill="none" stroke="#000"><path d="M5,2H15M1,7H11" stroke-width="3"></path><path d="M5.500,2V5M14.500,2V8.500H11M1.500,7V13.500H10.500V7"></path></svg></button>
          <button aria-label="關閉視窗"><svg width="14" height="14" stroke="#000" stroke-width="2"><path d="M1,1L13,13M13,1L1,13"></path></svg></button>
        </div>
      </nav>
      <div class="row fit">${this.band(fileBand, true)}${this.band(viewBand)}${this.band(selectBand)}${this.band(planeBand)}</div>
      <div class="row wide">${this.band(millBand)}${this.band(featureBand)}${this.band(editBand)}</div>
      <main class="work">
        <aside class="panel">
          <div class="caption"><i></i><button aria-label="關閉面板"><svg width="7" height="7" stroke="#000" stroke-width="2"><path d="M1,1L6,6M6,1L1,6"></path></svg></button></div>
          <ul class="tree">
            <li class="root">${icon(27, 75, [f("M27,75H75V123H27z"), f("M30,83H72V119H30z", "#b8b8b8"), f("M27,75H75V80H27z", "#0000d0"), p("M36,116V100L46,90H60L68,100V116zM36,103H68M48,112V106H58V112", "#000", 3, "#d8d8d8")], 16)}<span class="name">特徵</span></li>
            <li>${icon(27, 132, [p("M52,132V156M70,170H93", "#808080", 3, "none", "3 3"), p("M41,158H65V182H41z", "#707070", 3, "#fff"), p("M46,170H60")], 22)}
              ${icon(93, 143, [p("M111,148V170M98,182L108,172M106,170H130", "#000", 5), f("M111,143l-8,11h16z"), f("M137,170l-11,-8v16z"), f("M94,187v-12l11,10z"), p("M111,158L122,170M108,176H122", "#000", 3)], 16)}
              <span class="picked">XYZ</span></li>
            <li class="link">${icon(27, 198, p("M115,198V236H153", "#808080", 3, "none", "3 3"), 42, 22)}
              ${icon(153, 207, [p("M172,216H195V240L190,249H168V234L158,230V218H168", "#0000d0", 5), f("M170,207L182,214L170,221z")], 16)}
              <span class="name">2 連結</span></li>
          </ul>
          <div class="tabs" role="tablist">${tabs.map((t, i) => html`<button role="tab" aria-label=${t.label} aria-selected=${i === this.activeTab}
            class=${i === this.activeTab ? "active" : ""} @click=${() => { this.activeTab = i; }}>${icon(t.x, t.y, t.art, 16)}</button>`)}</div>
        </aside>
        <div class="side">
          <div class="dock" role="toolbar"><i></i>${sideTools.map((t) => this.tool(t))}</div>
          <div class="dock" role="toolbar"><i></i>${axisTools.map((t) => this.tool(t))}</div>
        </div>
        <section class="view">${this.drawing()}</section>
      </main>`;
  }
}
